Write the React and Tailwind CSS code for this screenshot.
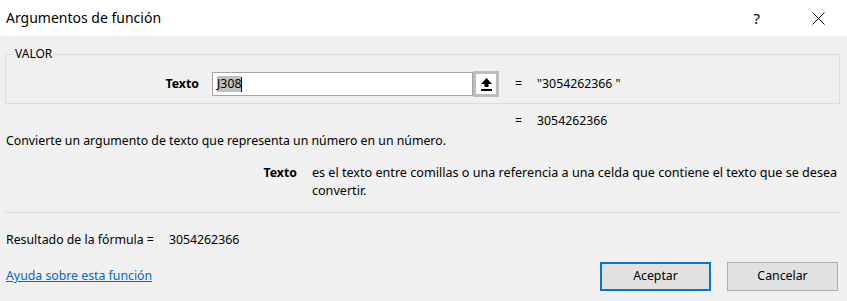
import React from "react";

export default function App() {
  const f = { fontFamily: '"Noto Sans", "Open Sans", sans-serif' };
  return (
    <div className="w-[847px] h-[301px] bg-[#f0f0f0] text-[12.3px] text-black overflow-hidden" style={f}>
      <div className="h-[36px] bg-white flex items-center pl-[6px] pr-[22px]">
        <span className="text-[14px] leading-[20px] text-black">Argumentos de función</span>
        <div className="ml-auto flex items-center gap-[52px]">
          <span className="text-[15px] leading-[20px]">?</span>
          <svg width="13" height="13" viewBox="0 0 13 13"><path d="M0.5 0.5 L12.5 12.5 M12.5 0.5 L0.5 12.5" stroke="#000" strokeWidth="1" /></svg>
        </div>
      </div>
      <div className="px-[5px]">
        <fieldset className="mt-[10px] border border-[#dcdcdc] h-[58px] w-[835px] px-[0px]">
          <legend className="ml-[8px] px-[1px] leading-[16px] text-[12px]">VALOR</legend>
          <div className="flex items-center mt-[9px] h-[26px]">
            <span className="w-[193px] text-right font-bold">Texto</span>
            <div className="ml-[13px] w-[261px] h-[24px] bg-white border border-[#a5a5a5] flex items-center pl-[4px]">
              <span className="bg-[#c0c0c0] leading-[16px]">J308</span>
              <span className="w-[1px] h-[15px] bg-black"></span>
            </div>
            <div className="w-[26px] h-[26px] border-[3px] border-[#bdbdbd] bg-white flex items-center justify-center">
              <svg width="11" height="13" viewBox="0 0 11 13">
                <path d="M5.5 0 L11 6 L7.5 6 L7.5 9 L3.5 9 L3.5 6 L0 6 Z" fill="#000" />
                <rect x="0" y="11" width="11" height="2" fill="#000" />
              </svg>
            </div>
            <span className="ml-[16px]">=</span>
            <span className="ml-[15px]">"3054262366 "</span>
          </div>
        </fieldset>
        <div className="flex items-center h-[18px] mt-[8px] pl-[510px]">
          <span>=</span>
          <span className="ml-[15px]">3054262366</span>
        </div>
        <div className="h-[18px] flex items-center pl-[1px] mt-[2px]">Convierte un argumento de texto que representa un número en un número.</div>
        <div className="flex mt-[14px] h-[36px] leading-[18px]">
          <span className="w-[293px] text-right font-bold">Texto</span>
          <span className="ml-[15px] w-[532px] text-[12.6px]">es el texto entre comillas o una referencia a una celda que contiene el texto que se desea convertir.</span>
        </div>
        <div className="mt-[12px] h-[1px] bg-[#dcdcdc] w-[835px]"></div>
        <div className="mt-[18px] h-[18px] flex items-center pl-[1px]">
          <span>Resultado de la fórmula =</span>
          <span className="ml-[15px]">3054262366</span>
        </div>
        <div className="mt-[13px] flex items-center h-[29px]">
          <a href="#" className="pl-[1px] text-[#0066cc] underline">Ayuda sobre esta función</a>
          <button className="ml-auto w-[111px] h-[29px] border-2 border-[#0078d7] bg-[#e1e1e1] text-[12.3px]">Aceptar</button>
          <button className="ml-[16px] mr-[4px] w-[111px] h-[29px] border border-[#adadad] bg-[#e1e1e1] text-[12.3px]">Cancelar</button>
        </div>
      </div>
    </div>
  );
}
